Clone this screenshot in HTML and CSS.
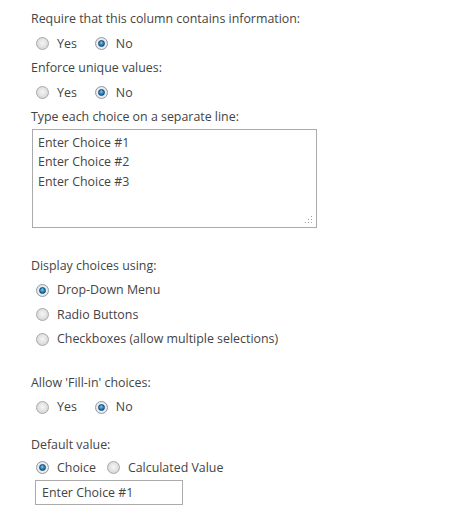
FILE: index.html
```html
<!DOCTYPE html>
<html>
<head>
<meta charset="utf-8">
<link rel="stylesheet" href="styles.css">
</head>
<body>
<div class="form">
  <div class="label">Require that this column contains information:</div>
  <div class="opts">
    <label class="opt"><span class="radio"></span>Yes</label>
    <label class="opt"><span class="radio on"></span>No</label>
  </div>
  <div class="label">Enforce unique values:</div>
  <div class="opts">
    <label class="opt"><span class="radio"></span>Yes</label>
    <label class="opt"><span class="radio on"></span>No</label>
  </div>
  <div class="label">Type each choice on a separate line:</div>
  <div class="textarea">
    <div>Enter Choice #1</div>
    <div>Enter Choice #2</div>
    <div>Enter Choice #3</div>
    <svg class="grip" width="8" height="8" viewBox="0 0 8 8"><rect x="6" y="0" width="1" height="1"/><rect x="6" y="3" width="1" height="1"/><rect x="3" y="3" width="1" height="1"/><rect x="6" y="6" width="1" height="1"/><rect x="3" y="6" width="1" height="1"/><rect x="0" y="6" width="1" height="1"/></svg>
  </div>
  <div class="label section">Display choices using:</div>
  <div class="stack">
    <label class="opt"><span class="radio on"></span>Drop-Down Menu</label>
    <label class="opt"><span class="radio"></span>Radio Buttons</label>
    <label class="opt"><span class="radio"></span>Checkboxes (allow multiple selections)</label>
  </div>
  <div class="label section2">Allow 'Fill-in' choices:</div>
  <div class="opts">
    <label class="opt"><span class="radio"></span>Yes</label>
    <label class="opt"><span class="radio on"></span>No</label>
  </div>
  <div class="label section3">Default value:</div>
  <div class="opts tight">
    <label class="opt"><span class="radio on"></span>Choice</label>
    <label class="opt"><span class="radio"></span>Calculated Value</label>
  </div>
  <div class="input">Enter Choice #1</div>
</div>
</body>
</html>
```
FILE: styles.css
```css
html, body {
  margin: 0;
  padding: 0;
  background: #fff;
}
body {
  font-family: "Open Sans", "Noto Sans", sans-serif;
  font-size: 12.4px;
  color: #444;
}
.form {
  padding: 9px 0 0 31px;
  display: flex;
  flex-direction: column;
}
.label {
  line-height: 20px;
  height: 20px;
}
.opts {
  display: flex;
  gap: 18px;
  padding-left: 5px;
  height: 29px;
  align-items: center;
}
.opts.tight {
  gap: 11px;
  height: 25px;
  align-items: flex-start;
  padding-top: 4px;
  box-sizing: border-box;
}
.opt {
  display: flex;
  align-items: center;
  gap: 8px;
  line-height: 18px;
}
.radio {
  width: 11px;
  height: 11px;
  border-radius: 50%;
  border: 1px solid #a9a9a9;
  background: radial-gradient(circle at 50% 45%, #f6f6f6 0%, #e2e2e2 50%, #c9c9c9 100%);
  box-sizing: content-box;
  position: relative;
  flex: none;
}
.radio.on {
  border-color: #8f9aa6;
  background: radial-gradient(circle at 50% 50%, #ffffff 0%, #e4e8ec 70%, #cdd3d9 100%);
}
.radio.on::after {
  content: "";
  position: absolute;
  left: 2px;
  top: 2px;
  width: 5px;
  height: 5px;
  border-radius: 50%;
  border: 1px solid #163f63;
  background: radial-gradient(circle at 45% 35%, #7cc6f2 0%, #2584c8 50%, #12558f 100%);
}
.textarea {
  margin-top: 2px;
  margin-left: 1px;
  width: 285px;
  height: 99px;
  border: 1px solid #ababab;
  padding: 3px 5px;
  box-sizing: border-box;
  line-height: 19.3px;
  position: relative;
}
.grip {
  position: absolute;
  right: 3px;
  bottom: 3px;
  fill: #a0a0a0;
}
.section {
  margin-top: 28px;
}
.section2 {
  margin-top: 21px;
}
.section3 {
  margin-top: 13px;
}
.stack {
  display: flex;
  flex-direction: column;
  padding-left: 5px;
  padding-top: 2px;
}
.stack .opt {
  height: 24.5px;
}
.input {
  margin-left: 4px;
  width: 148px;
  height: 25px;
  border: 1px solid #ababab;
  box-sizing: border-box;
  padding: 0 6px;
  line-height: 23px;
}
```
